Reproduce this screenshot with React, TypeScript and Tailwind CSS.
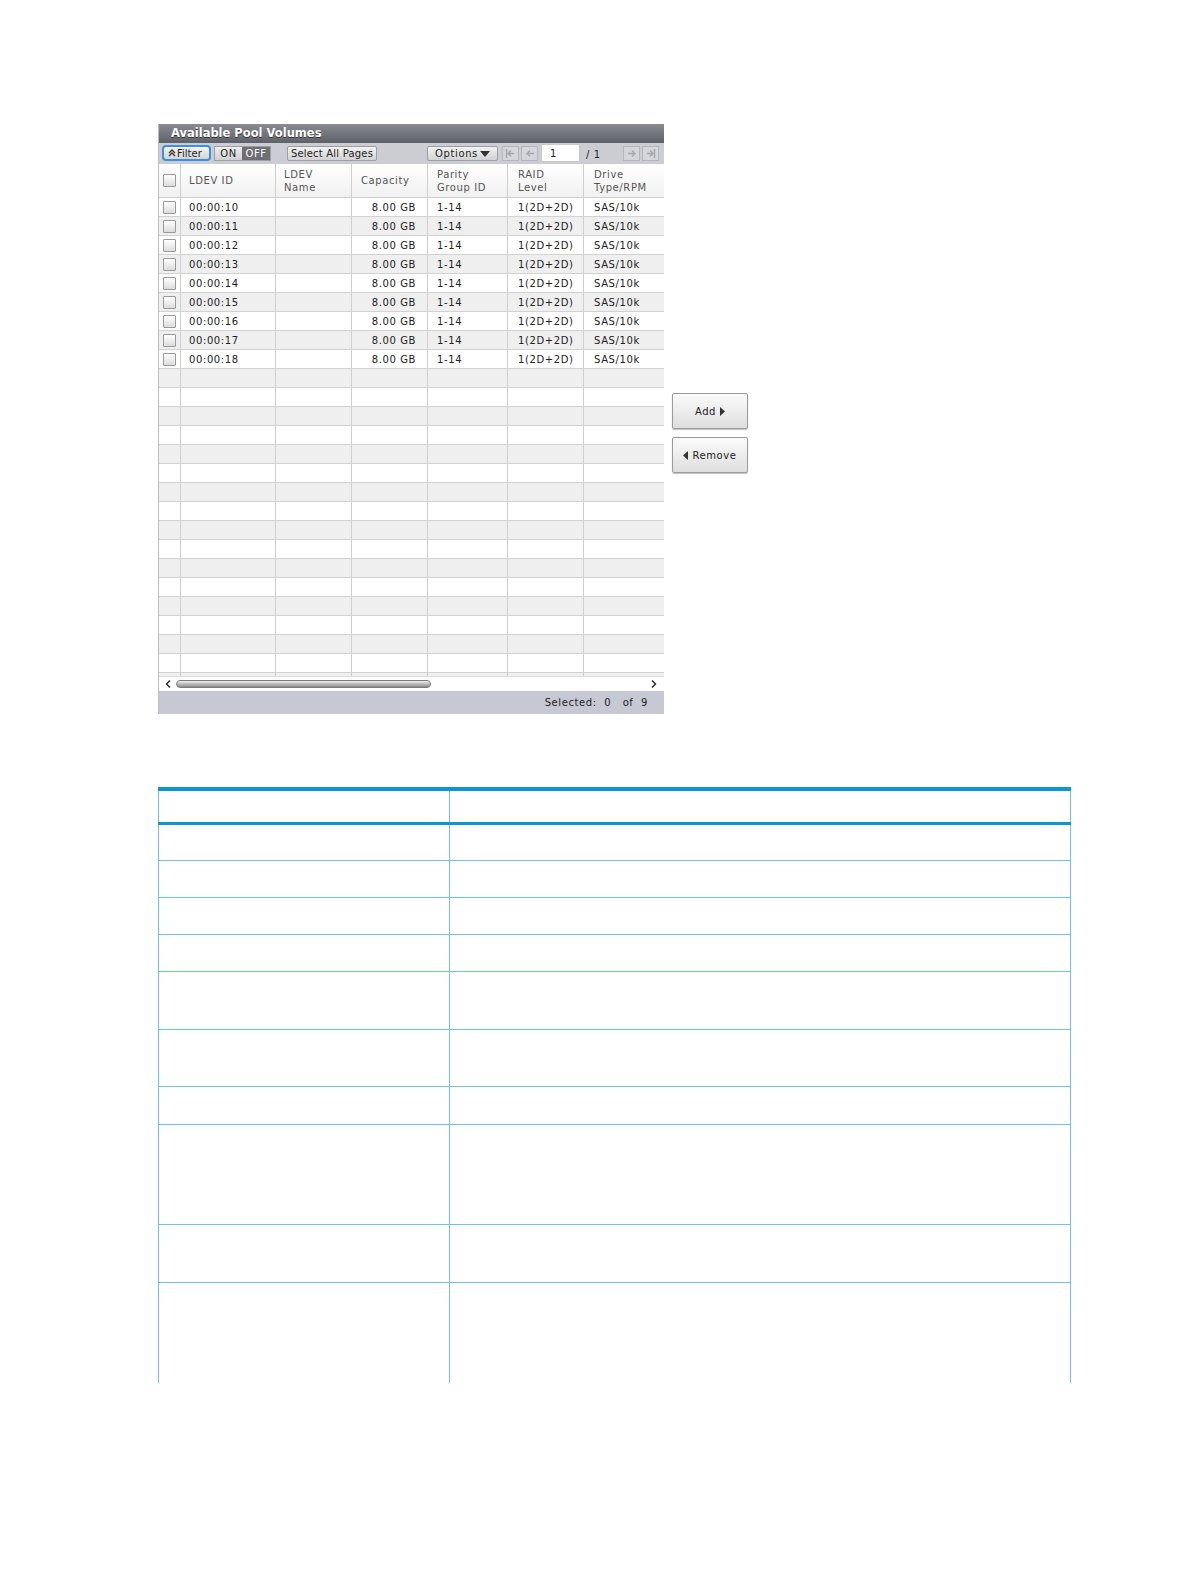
import React from "react";

const font = { fontFamily: '"DejaVu Sans", Verdana, sans-serif', letterSpacing: "0.6px" };

function Check() {
  return (
    <div className="w-[13px] h-[13px] border border-[#9a9a9a] bg-gradient-to-b from-[#ffffff] to-[#dcdcdc] rounded-[1px]" />
  );
}

const cols = [22, 95, 76, 76, 80, 76, 80];

const rows = ["10", "11", "12", "13", "14", "15", "16", "17", "18"];

function Cell({ w, children, className = "" }: { w: number; children?: React.ReactNode; className?: string }) {
  return (
    <div style={{ width: w }} className={`shrink-0 border-r border-[#cfcfcf] flex items-center whitespace-nowrap ${className}`}>
      {children}
    </div>
  );
}

function NavBtn({ children }: { children: React.ReactNode }) {
  return (
    <div className="w-[17px] h-[15px] border border-[#b4b6bb] bg-[#d4d6db] flex items-center justify-center text-[#a7a9ae]">
      {children}
    </div>
  );
}

function Panel() {
  return (
    <div className="w-[506px] shrink-0 bg-white border-l border-[#bdbdbd]" style={font}>
      <div className="h-[19px] bg-gradient-to-b from-[#8a8c92] to-[#5f6168] flex items-center pl-[12px]">
        <span className="text-white font-bold text-[11.5px] tracking-[0px]" style={{ textShadow: "0 1px 0 #333" }}>
          Available Pool Volumes
        </span>
      </div>
      <div className="h-[21px] bg-[#cbcdd3] flex items-center relative text-[10px] text-[#222]">
        <div className="absolute left-[3px] top-[2px] w-[49px] h-[16px] border-2 border-[#3d8fe0] rounded-[4px] bg-gradient-to-b from-[#f4f4f4] to-[#d5d5d5] flex items-center pl-[4px] gap-[1px] tracking-normal">
          <svg width="8" height="8" viewBox="0 0 8 8"><path d="M1 4 L4 1 L7 4 M1 7 L4 4 L7 7" stroke="#333" strokeWidth="1.3" fill="none" /></svg>
          <span>Filter</span>
        </div>
        <div className="absolute left-[55px] top-[3px] h-[15px] w-[57px] border border-[#9c9ea3] flex">
          <div className="w-[27px] bg-gradient-to-b from-[#eeeeee] to-[#d0d0d0] flex items-center justify-center">ON</div>
          <div className="flex-1 bg-[#6d6f74] text-white flex items-center justify-center">OFF</div>
        </div>
        <div className="absolute left-[128px] top-[3px] h-[15px] w-[90px] border border-[#9c9ea3] rounded-[2px] bg-gradient-to-b from-[#f2f2f2] to-[#d2d2d2] flex items-center justify-center whitespace-nowrap tracking-[0.2px]">
          Select All Pages
        </div>
        <div className="absolute left-[268px] top-[3px] h-[15px] w-[71px] border border-[#9c9ea3] rounded-[2px] bg-gradient-to-b from-[#f2f2f2] to-[#d2d2d2] flex items-center justify-center gap-[2px]">
          <span>Options</span>
          <svg width="10" height="6" viewBox="0 0 10 6"><path d="M0 0 H10 L5 6 Z" fill="#333" /></svg>
        </div>
        <div className="absolute left-[343px] top-[3px] flex gap-[2px]">
          <NavBtn>
            <svg width="11" height="9" viewBox="0 0 11 9"><path d="M1.5 0 V9 M9 4.5 H3 M6 1.5 L3 4.5 L6 7.5" stroke="currentColor" strokeWidth="1.5" fill="none" /></svg>
          </NavBtn>
          <NavBtn>
            <svg width="10" height="9" viewBox="0 0 10 9"><path d="M9 4.5 H2 M5 1.5 L2 4.5 L5 7.5" stroke="currentColor" strokeWidth="1.5" fill="none" /></svg>
          </NavBtn>
        </div>
        <div className="absolute left-[382px] top-[1px] w-[39px] h-[18px] bg-white border border-[#c9c9c9] flex items-center pl-[8px]">1</div>
        <div className="absolute left-[427px] top-[4px] whitespace-pre">/ 1</div>
        <div className="absolute left-[464px] top-[3px] flex gap-[2px]">
          <NavBtn>
            <svg width="10" height="9" viewBox="0 0 10 9"><path d="M1 4.5 H8 M5 1.5 L8 4.5 L5 7.5" stroke="currentColor" strokeWidth="1.5" fill="none" /></svg>
          </NavBtn>
          <NavBtn>
            <svg width="11" height="9" viewBox="0 0 11 9"><path d="M9.5 0 V9 M2 4.5 H8 M5 1.5 L8 4.5 L5 7.5" stroke="currentColor" strokeWidth="1.5" fill="none" /></svg>
          </NavBtn>
        </div>
      </div>
      {/* header */}
      <div className="h-[34px] flex bg-gradient-to-b from-[#ffffff] to-[#f1f1f1] border-b border-[#cfcfcf] text-[10px] text-[#555] leading-[13px]">
        <Cell w={cols[0]} className="justify-center"><Check /></Cell>
        <Cell w={cols[1]} className="pl-[8px]">LDEV ID</Cell>
        <Cell w={cols[2]} className="pl-[8px]"><div>LDEV<br />Name</div></Cell>
        <Cell w={cols[3]} className="pl-[9px]">Capacity</Cell>
        <Cell w={cols[4]} className="pl-[9px]"><div>Parity<br />Group ID</div></Cell>
        <Cell w={cols[5]} className="pl-[10px]"><div>RAID<br />Level</div></Cell>
        <Cell w={cols[6]} className="pl-[10px] border-r-0"><div>Drive<br />Type/RPM</div></Cell>
      </div>
      <div className="h-[478px] overflow-hidden">
        {Array.from({ length: 26 }).map((_, i) => {
          const r = rows[i];
          return (
            <div key={i} className={`h-[19px] flex border-b border-[#d2d2d2] text-[10px] text-[#222] ${i % 2 === 1 ? "bg-[#efefef]" : "bg-white"}`}>
              <Cell w={cols[0]} className="justify-center">{r && <Check />}</Cell>
              <Cell w={cols[1]} className="pl-[8px]">{r && `00:00:${r}`}</Cell>
              <Cell w={cols[2]} />
              <Cell w={cols[3]} className="justify-end pr-[11px]">{r && "8.00 GB"}</Cell>
              <Cell w={cols[4]} className="pl-[9px]">{r && "1-14"}</Cell>
              <Cell w={cols[5]} className="pl-[10px]">{r && "1(2D+2D)"}</Cell>
              <Cell w={cols[6]} className="pl-[10px] border-r-0">{r && "SAS/10k"}</Cell>
            </div>
          );
        })}
      </div>
      <div className="h-[15px] bg-white flex items-center relative border-t border-[#e0e0e0]">
        <svg className="absolute left-[6px] top-[3px]" width="6" height="8" viewBox="0 0 6 8"><path d="M5 0.5 L1.5 4 L5 7.5" stroke="#222" strokeWidth="1.4" fill="none" /></svg>
        <div className="absolute left-[17px] top-[3px] w-[255px] h-[8px] rounded-full border border-[#7a7a7a] bg-gradient-to-b from-[#f0f0f0] via-[#bdbdbd] to-[#8a8a8a]" />
        <svg className="absolute right-[7px] top-[3px]" width="6" height="8" viewBox="0 0 6 8"><path d="M1 0.5 L4.5 4 L1 7.5" stroke="#222" strokeWidth="1.4" fill="none" /></svg>
      </div>
      <div className="h-[23px] bg-[#c6c9d4] flex items-center justify-end pr-[16px] text-[10px] text-[#222] whitespace-pre">
        {"Selected:  0   of  9"}
      </div>
    </div>
  );
}

function SideBtn({ children }: { children: React.ReactNode }) {
  return (
    <div className="w-[76px] h-[36px] border border-[#9b9b9b] rounded-[2px] bg-gradient-to-b from-[#fbfbfb] to-[#dedede] flex items-center justify-center gap-[4px] text-[10px] text-[#222] shadow-[0_1px_1px_rgba(0,0,0,0.25)]" style={font}>
      {children}
    </div>
  );
}

function BigTable() {
  const heights = [36, 37, 37, 37, 58, 57, 38, 100, 58, 100];
  return (
    <div className="w-[913px] border-t-[4px] border-[#0c97cf]">
      <div className="flex h-[34px] border-b-[3px] border-[#0c97cf]">
        <div className="w-[292px] border-l border-r border-[#6ec3e8]" />
        <div className="flex-1 border-r border-[#6ec3e8]" />
      </div>
      {heights.map((h, i) => (
        <div key={i} style={{ height: h }} className={`flex ${i < heights.length - 1 ? "border-b border-[#6ec3e8]" : ""}`}>
          <div className="w-[292px] border-l border-r border-[#6ec3e8]" />
          <div className="flex-1 border-r border-[#6ec3e8]" />
        </div>
      ))}
    </div>
  );
}

export default function App() {
  return (
    <div className="bg-white pl-[158px] pt-[124px] pb-[100px]">
      <div className="flex items-start">
        <Panel />
        <div className="ml-[8px] mt-[269px] flex flex-col gap-[8px]">
          <SideBtn>
            <span>Add</span>
            <svg width="5" height="9" viewBox="0 0 5 9"><path d="M0 0 L5 4.5 L0 9 Z" fill="#333" /></svg>
          </SideBtn>
          <SideBtn>
            <svg width="5" height="9" viewBox="0 0 5 9"><path d="M5 0 L0 4.5 L5 9 Z" fill="#333" /></svg>
            <span>Remove</span>
          </SideBtn>
        </div>
      </div>
      <div className="mt-[73px]">
        <BigTable />
      </div>
    </div>
  );
}
